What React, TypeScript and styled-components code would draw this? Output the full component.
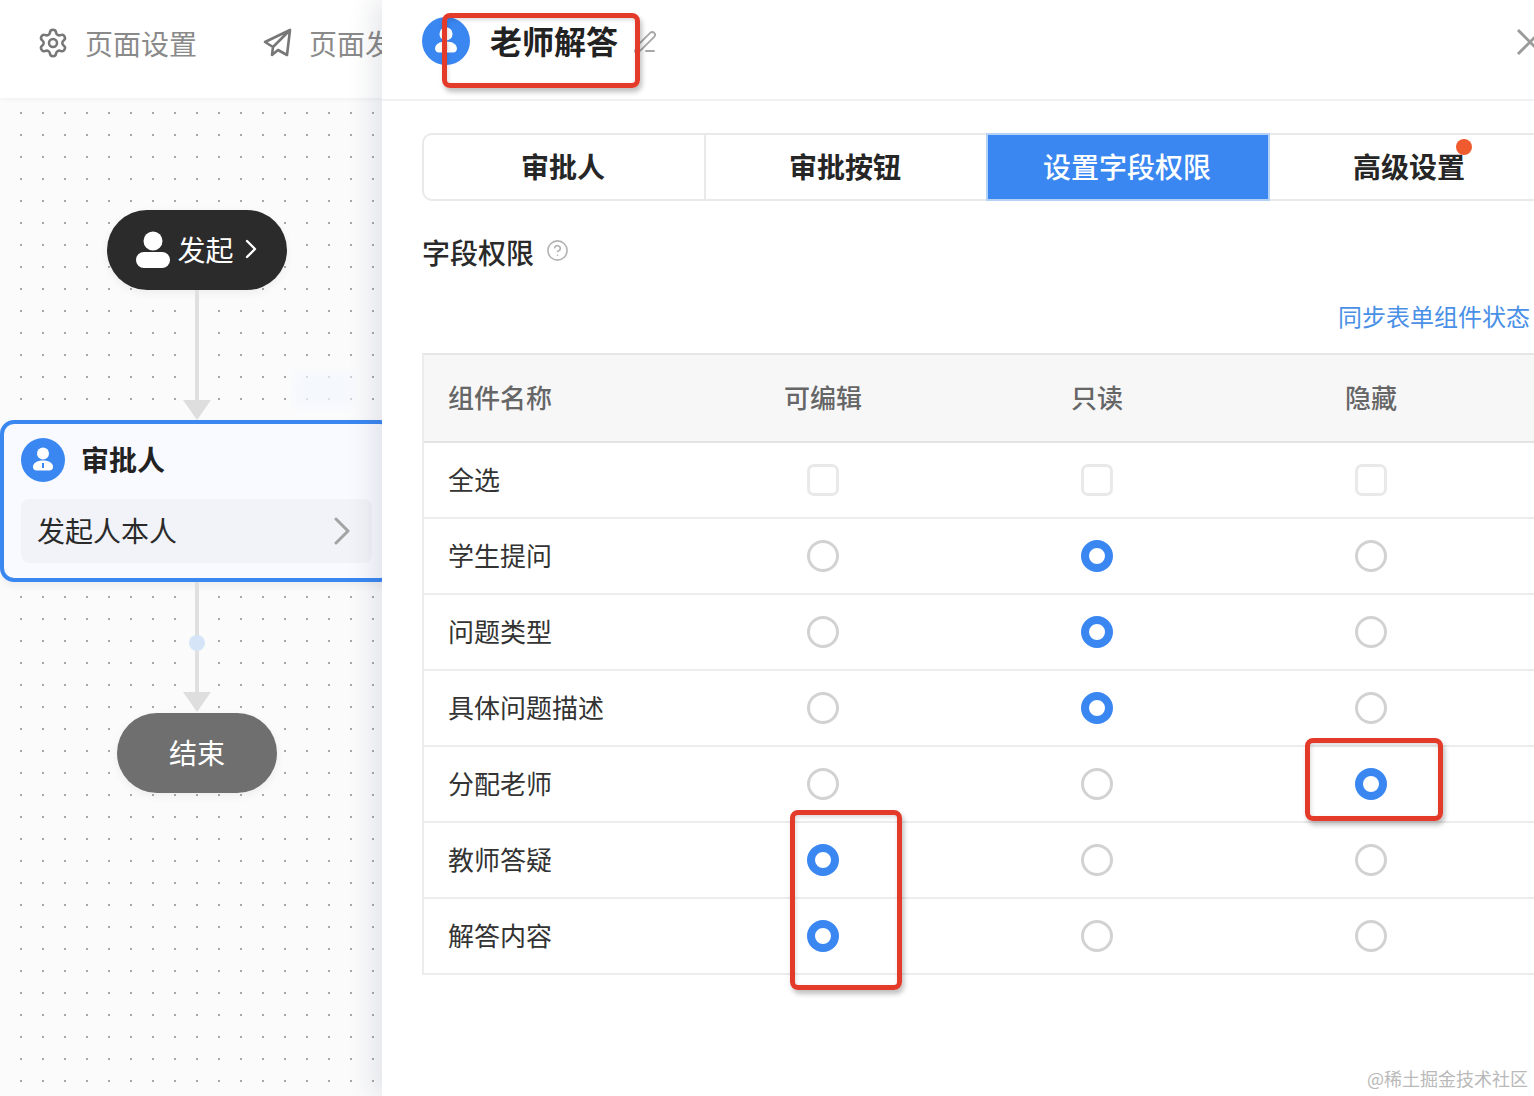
import React from 'react';
import styled, { createGlobalStyle } from 'styled-components';
import { Settings, PenLine, CircleHelp } from 'lucide-react';

const BLUE = '#3a87f2';

const GlobalStyle = createGlobalStyle`
    html, body {
        margin: 0;
        padding: 0;
        background: #fff;
    }
    * {
        box-sizing: border-box;
    }
    body {
        font-family: "Noto Sans CJK SC", "Noto Sans", sans-serif;
    }
`

const Page = styled.div`
    position: relative;
    display: flex;
    width: 1534px;
    height: 1096px;
    overflow: hidden;
    background: #fff;
`

const Designer = styled.div`
    display: flex;
    flex-direction: column;
    width: 382px;
    flex-shrink: 0;
`

const TopBar = styled.div`
    display: flex;
    align-items: center;
    height: 98px;
    padding: 0 0 12px 37px;
    flex-shrink: 0;
    overflow: hidden;
    white-space: nowrap;
    box-shadow: 0 2px 4px rgba(0, 0, 0, 0.04);
    position: relative;
    z-index: 1;
`

const TopItem = styled.div`
    display: flex;
    align-items: center;
    flex-shrink: 0;
    gap: 16px;
    margin-right: 66px;
    font-size: 28px;
    color: #8a8a8a;
    svg {
        color: #777;
        flex-shrink: 0;
    }
`

const PlaneIcon = styled.svg`
    width: 30px;
    height: 30px;
    fill: none;
    stroke: #777;
    stroke-width: 2.6;
    stroke-linejoin: round;
    stroke-linecap: round;
`

const Canvas = styled.div`
    position: relative;
    flex: 1;
    overflow: hidden;
    padding-top: 112px;
    background-color: #fbfbfc;
    background-image: radial-gradient(circle at 11px 11px, #a8a8a8 0, #a8a8a8 1px, transparent 1.4px);
    background-size: 22px 22px;
    background-position: 10px 4px;
`

const Ghost = styled.div`
    position: absolute;
    left: 294px;
    top: 274px;
    width: 60px;
    height: 36px;
    border-radius: 6px;
    background: #f3f7fe;
    opacity: 0.7;
    filter: blur(3px);
`

const Flow = styled.div`
    display: flex;
    flex-direction: column;
    align-items: center;
    width: 394px;
`

const Pill = styled.div<{ $dark?: boolean }>`
    display: flex;
    align-items: center;
    justify-content: center;
    width: ${p => (p.$dark ? '180px' : '160px')};
    height: 80px;
    padding-bottom: 2px;
    border-radius: 40px;
    background: ${p => (p.$dark ? '#2b2b2b' : '#6f6f6f')};
    color: #fff;
    font-size: 28px;
    box-shadow: 0 3px 10px rgba(0, 0, 0, 0.06);
`

const StartIcon = styled.svg`
    width: 36px;
    height: 38px;
    margin: 2px 6px 0 -1px;
    fill: #fff;
`

const Chevron = styled.svg`
    fill: none;
    stroke-width: 2.4;
    stroke-linecap: round;
    stroke-linejoin: round;
`

const StartChevron = styled(Chevron)`
    width: 14px;
    height: 20px;
    margin-left: 10px;
    stroke: #fff;
`

const RowChevron = styled(Chevron)`
    width: 16px;
    height: 28px;
    margin-top: 2px;
    stroke: #a3a3a3;
    stroke-width: 3;
`

const Line = styled.div<{ $height: number }>`
    position: relative;
    width: 4px;
    height: ${p => p.$height}px;
    background: #e0e0e0;
`

const Arrow = styled.div<{ $gap?: boolean }>`
    width: 0;
    height: 0;
    border-left: 14px solid transparent;
    border-right: 14px solid transparent;
    border-top: 20px solid #dedede;
    margin-bottom: ${p => (p.$gap ? '1px' : '0')};
`

const AddDot = styled.div`
    position: absolute;
    left: -6px;
    top: 53px;
    width: 16px;
    height: 16px;
    border-radius: 50%;
    background: #d5e4f6;
`

const NodeCard = styled.div`
    width: 394px;
    height: 162px;
    padding: 14px 17px 0;
    border: 4px solid ${BLUE};
    border-radius: 14px;
    background: #f8faff;
    box-shadow: 0 4px 10px rgba(0, 0, 0, 0.06);
`

const NodeHead = styled.div`
    display: flex;
    align-items: center;
    gap: 16px;
    height: 44px;
    margin-bottom: 17px;
`

const NodeTitle = styled.div`
    padding-bottom: 2px;
    font-size: 28px;
    font-weight: 700;
    color: #222;
`

const NodeRow = styled.div`
    display: flex;
    align-items: center;
    justify-content: space-between;
    width: 351px;
    height: 64px;
    padding: 0 22px 2px 16px;
    border-radius: 8px;
    background: #f1f3f8;
    font-size: 28px;
    color: #2a2a2a;
`

const Panel = styled.div`
    position: relative;
    z-index: 2;
    display: flex;
    flex-direction: column;
    flex: 1;
    min-width: 0;
    overflow: hidden;
    background: #fff;
    box-shadow: -10px 0 24px rgba(30, 40, 70, 0.1);
`

const PanelHeader = styled.div`
    display: flex;
    align-items: center;
    height: 101px;
    padding: 0 0 18px 40px;
    border-bottom: 2px solid #f1f1f3;
    flex-shrink: 0;
    svg {
        flex-shrink: 0;
    }
`

const PanelTitle = styled.div`
    margin: 0 15px 2px 20px;
    font-size: 32px;
    font-weight: 700;
    line-height: 40px;
    color: #222;
`

const EditIcon = styled(PenLine)`
    color: #a6a6a6;
    margin-top: 2px;
`

const CloseIcon = styled.svg`
    position: absolute;
    left: 1134px;
    top: 28px;
    width: 28px;
    height: 28px;
    stroke: #9b9b9b;
    stroke-width: 3;
    fill: none;
`

const PanelBody = styled.div`
    display: flex;
    flex-direction: column;
    padding-left: 40px;
`

const Tabs = styled.div`
    display: flex;
    width: 1132px;
    height: 68px;
    margin-top: 32px;
    border: 2px solid #e9e9e9;
    border-radius: 10px 0 0 10px;
    background: #fff;
`

const Tab = styled.div<{ $active?: boolean }>`
    position: relative;
    display: flex;
    align-items: center;
    justify-content: center;
    flex: none;
    width: ${p => (p.$active ? '284px' : '282px')};
    margin: ${p => (p.$active ? '-2px 0 -2px -2px' : '0')};
    padding: 0 2px 2px 0;
    border-right: 2px solid #e9e9e9;
    ${p => p.$active && 'border: 2px solid #b5d2f6;'}
    background: ${p => (p.$active ? BLUE : '#fff')};
    color: ${p => (p.$active ? '#fff' : '#262626')};
    font-size: 28px;
    font-weight: ${p => (p.$active ? 500 : 700)};
    &:first-child {
        border-radius: 10px 0 0 10px;
    }
`

const Badge = styled.span`
    position: absolute;
    left: 186px;
    top: 4px;
    width: 16px;
    height: 16px;
    border-radius: 50%;
    background: #ef5b2e;
`

const SectionTitle = styled.div`
    display: flex;
    align-items: center;
    gap: 12px;
    height: 40px;
    margin-top: 31px;
    font-size: 28px;
    font-weight: 500;
    color: #2a2a2a;
    svg {
        color: #b4b4b4;
        margin-bottom: 4px;
    }
`

const SyncRow = styled.div`
    display: flex;
    justify-content: flex-end;
    height: 34px;
    margin-top: 27px;
    padding-right: 4px;
    font-size: 24px;
    line-height: 34px;
    color: #4a90e6;
`

const Table = styled.div`
    width: 1132px;
    margin-top: 20px;
    border-top: 2px solid #e6e6e6;
    border-left: 2px solid #ececec;
`

const Row = styled.div<{ $head?: boolean }>`
    display: grid;
    grid-template-columns: 262px 274px 274px 274px 1fr;
    align-items: center;
    height: ${p => (p.$head ? '88px' : '76px')};
    padding-bottom: ${p => (p.$head ? '4px' : '0')};
    border-bottom: 2px solid ${p => (p.$head ? '#e4e4e4' : '#ececec')};
    background: ${p => (p.$head ? '#f7f7f8' : '#fff')};
    font-size: 26px;
    font-weight: ${p => (p.$head ? 500 : 400)};
    color: ${p => (p.$head ? '#666' : '#333')};
`

const NameCell = styled.div<{ $head?: boolean }>`
    padding: 0 0 ${p => (p.$head ? '0' : '4px')} 24px;
`

const Cell = styled.div`
    display: flex;
    justify-content: center;
`

const Radio = styled.span<{ $checked?: boolean }>`
    display: block;
    width: 32px;
    height: 32px;
    border-radius: 50%;
    border: ${p => (p.$checked ? `8px solid ${BLUE}` : '3.5px solid #d2d2d2')};
    background: #fff;
`

const CheckBox = styled.span`
    display: block;
    width: 32px;
    height: 32px;
    border-radius: 7px;
    border: 3.5px solid #e9e9e9;
    background: #fff;
`

const Callout = styled.div<{ $x: number; $y: number; $w: number; $h: number }>`
    position: absolute;
    z-index: 5;
    left: ${p => p.$x}px;
    top: ${p => p.$y}px;
    width: ${p => p.$w}px;
    height: ${p => p.$h}px;
    border: 5px solid #e33a2a;
    border-radius: 8px;
    box-shadow: 2px 4px 5px rgba(0, 0, 0, 0.25), inset 1px 2px 4px rgba(0, 0, 0, 0.15);
`

const Watermark = styled.div`
    position: absolute;
    z-index: 5;
    right: 6px;
    bottom: 6px;
    font-size: 18px;
    line-height: 24px;
    color: #b9b9b9;
`

function PersonAvatar({ size }: { size: number }) {
    return (
        <svg width={size} height={size} viewBox="0 0 44 44">
            <circle cx="22" cy="22" r="22" fill={BLUE} />
            <circle cx="22" cy="15.5" r="6" fill="#fff" />
            <path d="M12 29c0-4 4-6.5 10-6.5S32 25 32 29c0 2.200-1.500 3.500-3.500 3.500h-13C13.500 32.500 12 31.200 12 29z" fill="#fff" />
            <rect x="21" y="25" width="2" height="5" fill={BLUE} />
        </svg>
    );
}

const rows = [
    { name: '学生提问', checked: 1 },
    { name: '问题类型', checked: 1 },
    { name: '具体问题描述', checked: 1 },
    { name: '分配老师', checked: 2 },
    { name: '教师答疑', checked: 0 },
    { name: '解答内容', checked: 0 },
];

export default function App() {
    return (
        <Page>
            <GlobalStyle />
            <Designer>
                <TopBar>
                    <TopItem>
                        <Settings size={32} strokeWidth={1.9} />
                        页面设置
                    </TopItem>
                    <TopItem>
                        <PlaneIcon viewBox="0 0 30 30">
                            <path d="M27 2L2 14l8 5-1 8 6-5 9 5zM10 19L27 2" />
                        </PlaneIcon>
                        页面发布
                    </TopItem>
                </TopBar>
                <Canvas>
                    <Ghost />
                    <Flow>
                        <Pill $dark>
                            <StartIcon viewBox="0 0 36 38">
                                <circle cx="18" cy="10" r="9.500" />
                                <rect x="1" y="21" width="34" height="16" rx="8" />
                            </StartIcon>
                            发起
                            <StartChevron viewBox="0 0 14 20">
                                <path d="M3 2l8 8-8 8" />
                            </StartChevron>
                        </Pill>
                        <Line $height={110} />
                        <Arrow />
                        <NodeCard>
                            <NodeHead>
                                <PersonAvatar size={44} />
                                <NodeTitle>审批人</NodeTitle>
                            </NodeHead>
                            <NodeRow>
                                发起人本人
                                <RowChevron viewBox="0 0 16 28">
                                    <path d="M2 2l12 12L2 26" />
                                </RowChevron>
                            </NodeRow>
                        </NodeCard>
                        <Line $height={110}>
                            <AddDot />
                        </Line>
                        <Arrow $gap />
                        <Pill>结束</Pill>
                    </Flow>
                </Canvas>
            </Designer>
            <Panel>
                <PanelHeader>
                    <PersonAvatar size={48} />
                    <PanelTitle>老师解答</PanelTitle>
                    <EditIcon size={24} strokeWidth={1.8} />
                </PanelHeader>
                <CloseIcon viewBox="0 0 28 28">
                    <path d="M2 2l24 24M26 2L2 26" />
                </CloseIcon>
                <PanelBody>
                    <Tabs>
                        <Tab>审批人</Tab>
                        <Tab>审批按钮</Tab>
                        <Tab $active>设置字段权限</Tab>
                        <Tab>
                            高级设置
                            <Badge />
                        </Tab>
                    </Tabs>
                    <SectionTitle>
                        字段权限
                        <CircleHelp size={23} strokeWidth={1.7} />
                    </SectionTitle>
                    <SyncRow>同步表单组件状态</SyncRow>
                    <Table>
                        <Row $head>
                            <NameCell $head>组件名称</NameCell>
                            <Cell>可编辑</Cell>
                            <Cell>只读</Cell>
                            <Cell>隐藏</Cell>
                        </Row>
                        <Row>
                            <NameCell>全选</NameCell>
                            <Cell><CheckBox /></Cell>
                            <Cell><CheckBox /></Cell>
                            <Cell><CheckBox /></Cell>
                        </Row>
                        {rows.map(row => (
                            <Row key={row.name}>
                                <NameCell>{row.name}</NameCell>
                                {[0, 1, 2].map(col => (
                                    <Cell key={col}>
                                        <Radio $checked={row.checked === col} />
                                    </Cell>
                                ))}
                            </Row>
                        ))}
                    </Table>
                </PanelBody>
            </Panel>
            <Callout $x={442} $y={13} $w={198} $h={75} />
            <Callout $x={790} $y={810} $w={112} $h={180} />
            <Callout $x={1305} $y={738} $w={138} $h={83} />
            <Watermark>@稀土掘金技术社区</Watermark>
        </Page>
    );
}
